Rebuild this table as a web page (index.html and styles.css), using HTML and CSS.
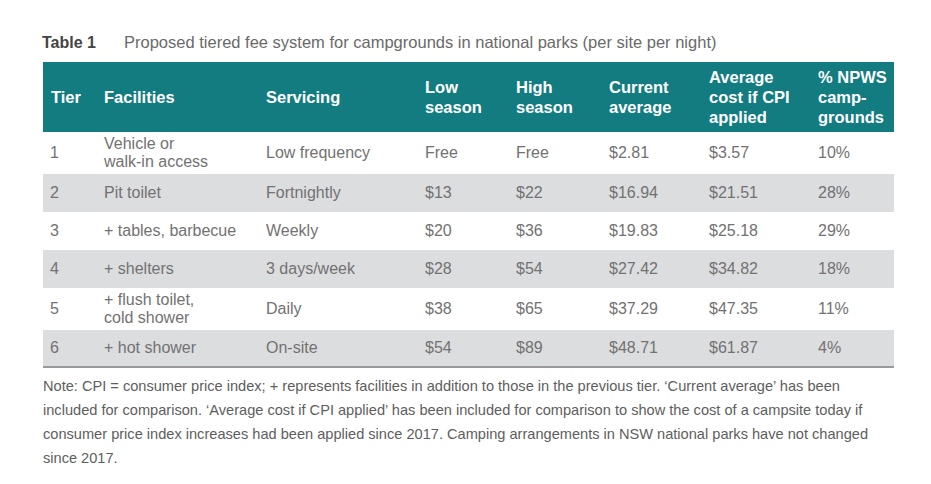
FILE: index.html
```html
<!DOCTYPE html>
<html lang="en">
<head>
<meta charset="utf-8">
<title>Table 1</title>
<link rel="stylesheet" href="styles.css">
</head>
<body>
<div class="page">
  <div class="caption">
    <span class="caption-label">Table 1</span>
    <span class="caption-text">Proposed tiered fee system for campgrounds in national parks (per site per night)</span>
  </div>
  <table class="fees">
    <colgroup>
      <col class="c1"><col class="c2"><col class="c3"><col class="c4"><col class="c5"><col class="c6"><col class="c7"><col class="c8">
    </colgroup>
    <thead>
      <tr>
        <th>Tier</th>
        <th>Facilities</th>
        <th>Servicing</th>
        <th>Low<br>season</th>
        <th>High<br>season</th>
        <th>Current<br>average</th>
        <th>Average<br>cost if CPI<br>applied</th>
        <th>% NPWS<br>camp-<br>grounds</th>
      </tr>
    </thead>
    <tbody>
      <tr class="tall">
        <td>1</td><td>Vehicle or<br>walk-in access</td><td>Low frequency</td><td>Free</td><td>Free</td><td>$2.81</td><td>$3.57</td><td>10%</td>
      </tr>
      <tr class="alt">
        <td>2</td><td>Pit toilet</td><td>Fortnightly</td><td>$13</td><td>$22</td><td>$16.94</td><td>$21.51</td><td>28%</td>
      </tr>
      <tr>
        <td>3</td><td>+ tables, barbecue</td><td>Weekly</td><td>$20</td><td>$36</td><td>$19.83</td><td>$25.18</td><td>29%</td>
      </tr>
      <tr class="alt">
        <td>4</td><td>+ shelters</td><td>3 days/week</td><td>$28</td><td>$54</td><td>$27.42</td><td>$34.82</td><td>18%</td>
      </tr>
      <tr class="tall">
        <td>5</td><td>+ flush toilet,<br>cold shower</td><td>Daily</td><td>$38</td><td>$65</td><td>$37.29</td><td>$47.35</td><td>11%</td>
      </tr>
      <tr class="alt last">
        <td>6</td><td>+ hot shower</td><td>On-site</td><td>$54</td><td>$89</td><td>$48.71</td><td>$61.87</td><td>4%</td>
      </tr>
    </tbody>
  </table>
  <p class="note">Note: CPI = consumer price index; + represents facilities in addition to those in the previous tier. ‘Current average’ has been included for comparison. ‘Average cost if CPI applied’ has been included for comparison to show the cost of a campsite today if consumer price index increases had been applied since 2017. Camping arrangements in NSW national parks have not changed since 2017.</p>
</div>
</body>
</html>
```
FILE: styles.css
```css
html, body {
  margin: 0;
  padding: 0;
  background: #ffffff;
}

body {
  font-family: "Liberation Sans", Arial, Helvetica, sans-serif;
}

.page {
  padding: 31px 37px 0 43px;
  width: 851px;
}

.caption {
  display: flex;
  align-items: baseline;
  height: 31px;
  line-height: 22px;
  margin-left: -1px;
}

.caption-label {
  color: #444444;
  font-size: 16px;
  font-weight: bold;
  width: 82px;
}

.caption-text {
  color: #6a6a6a;
  font-size: 16.5px;
}

.fees {
  width: 851px;
  border-collapse: collapse;
  table-layout: fixed;
}

.c1 { width: 55px; }
.c2 { width: 162px; }
.c3 { width: 159px; }
.c4 { width: 91px; }
.c5 { width: 93px; }
.c6 { width: 100px; }
.c7 { width: 109px; }
.c8 { width: 82px; }

.fees th {
  background: #127c80;
  color: #ffffff;
  font-size: 16.5px;
  font-weight: bold;
  line-height: 20px;
  text-align: left;
  vertical-align: middle;
  height: 70px;
  padding: 0 0 0 6px;
  box-sizing: border-box;
}

.fees th:first-child {
  padding-left: 8px;
}

.fees td {
  font-size: 16px;
  line-height: 18px;
  color: #727272;
  padding: 3px 0 3px 6px;
  height: 32px;
  vertical-align: middle;
  text-align: left;
}

.fees td:first-child {
  padding-left: 7px;
}

.fees tr.tall td {
  height: 36px;
}

.fees tr.alt td {
  background: #dcdddf;
}

.fees tr.last td {
  height: 30px;
  border-bottom: 2px solid #9a9a9a;
}

.note {
  margin: 6px 0 0 0;
  font-size: 14.6px;
  line-height: 24px;
  color: #5e5e5e;
}
```
